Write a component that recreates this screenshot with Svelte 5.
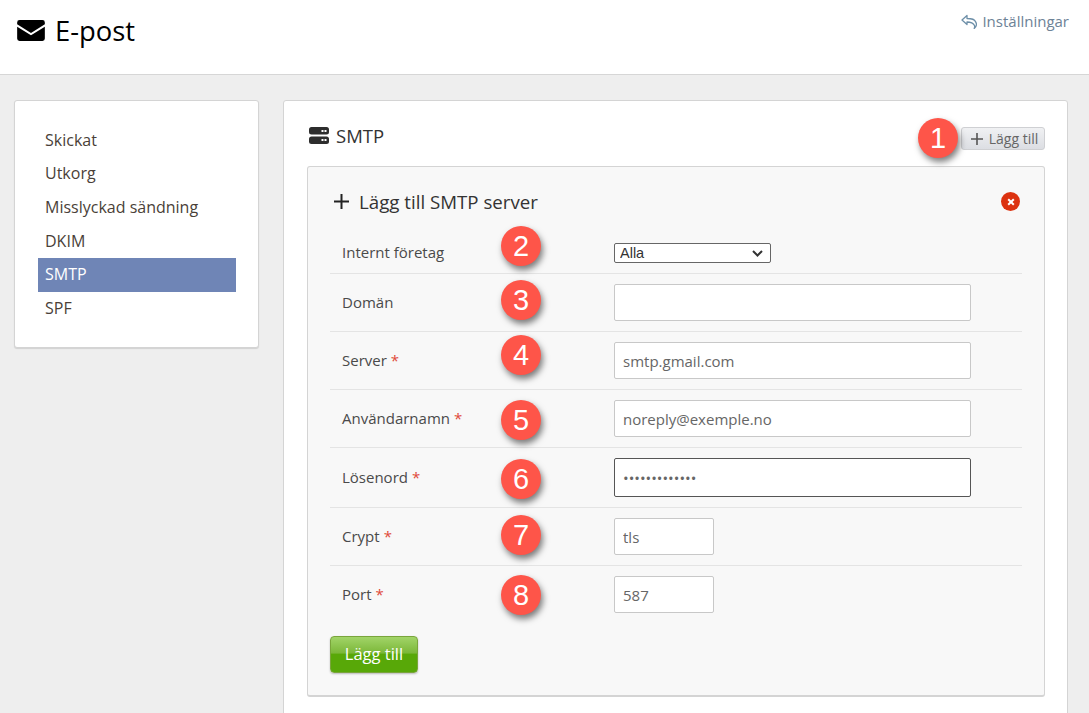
<script>
  const menu = ['Skickat', 'Utkorg', 'Misslyckad sändning', 'DKIM', 'SMTP', 'SPF'];
  const rows = [
    { label: 'Domän', value: '', req: false },
    { label: 'Server', value: 'smtp.gmail.com', req: true },
    { label: 'Användarnamn', value: 'noreply@exemple.no', req: true },
    { label: 'Lösenord', value: 'abcdefghijklm', req: true, type: 'password', focus: true },
    { label: 'Crypt', value: 'tls', req: true, small: true },
    { label: 'Port', value: '587', req: true, small: true }
  ];
  // annotation markers placed on top of the screenshot
  const badges = [
    { n: 1, x: 938, y: 138 },
    { n: 2, x: 521, y: 246 },
    { n: 3, x: 521, y: 300 },
    { n: 4, x: 521, y: 355 },
    { n: 5, x: 521, y: 420 },
    { n: 6, x: 521, y: 479 },
    { n: 7, x: 521, y: 535 },
    { n: 8, x: 521, y: 595 }
  ];
</script>

<div class="page">
  <header class="top">
    <h1>
      <svg width="28" height="21" viewBox="0 0 29 22">
        <path d="M2.500 0h24A2.500 2.500 0 0 1 29 2.500v2L14.500 13.500 0 4.500v-2A2.500 2.500 0 0 1 2.500 0z" fill="#000" />
        <path d="M0 7l14.500 9 14.500-9v12.500A2.500 2.500 0 0 1 26.500 22h-24A2.500 2.500 0 0 1 0 19.500z" fill="#000" />
      </svg>
      E-post
    </h1>
    <a class="settings" href="#top">
      <svg width="16" height="15" viewBox="0 0 16 15" fill="none" stroke="#6d8fa8" stroke-width="1.300">
        <path d="M6 1.500L1 6l5 4.500V8c3.500 0 6 .5 7.500 3.500 .3 1 .2 2-.3 3 2.600-2 2.800-5 1.200-7C13.700 5.500 10 4.500 6 4.500z" stroke-linejoin="round" />
      </svg>
      Inställningar
    </a>
  </header>

  <div class="body">
    <aside class="side">
      <ul>
        {#each menu as item}
          <li class:active={item === 'SMTP'}>{item}</li>
        {/each}
      </ul>
    </aside>

    <section class="panel">
      <div class="panel-head">
        <h2>
          <svg width="20" height="17" viewBox="0 0 20 17">
            <rect width="20" height="7.500" rx="2.500" fill="#2d2d2d" />
            <rect y="9.500" width="20" height="7.500" rx="2.500" fill="#2d2d2d" />
            <g fill="#fff">
              <rect x="12.500" y="3" width="2" height="2" /><rect x="15.500" y="3" width="2" height="2" />
              <rect x="12.500" y="12" width="2" height="2" /><rect x="15.500" y="12" width="2" height="2" />
            </g>
          </svg>
          SMTP
        </h2>
        <button class="add-small">
          <svg width="12" height="12" viewBox="0 0 12 12"><path d="M6 0v12M0 6h12" stroke="#555" stroke-width="1.600" /></svg>
          Lägg till
        </button>
      </div>

      <div class="box">
        <div class="box-head">
          <h3>
            <svg width="15" height="15" viewBox="0 0 15 15"><path d="M7.500 0v15M0 7.500h15" stroke="#222" stroke-width="2" /></svg>
            Lägg till SMTP server
          </h3>
          <span class="close">
            <svg width="8" height="8" viewBox="0 0 8 8"><path d="M1.200 1.200l5.600 5.600M6.800 1.200L1.200 6.800" stroke="#fff" stroke-width="2" /></svg>
          </span>
        </div>

        <div class="row first">
          <label for="company">Internt företag</label>
          <div class="select-wrap">
            <select id="company"><option>Alla</option></select>
            <svg class="chevron" width="11" height="7" viewBox="0 0 11 7"><path d="M1 1l4.500 4.500L10 1" fill="none" stroke="#333" stroke-width="2" /></svg>
          </div>
        </div>
        {#each rows as r}
          <div class="row" class:tall={r.focus}>
            <label for={r.label}>{r.label}{#if r.req}<span class="req">*</span>{/if}</label>
            <input id={r.label} type={r.type ?? 'text'} value={r.value} class:small={r.small} class:focus={r.focus} />
          </div>
        {/each}

        <button class="submit">Lägg till</button>
      </div>
    </section>
  </div>

  {#each badges as b}
    <span class="badge" style="left:{b.x - 20}px;top:{b.y - 20}px">{b.n}</span>
  {/each}
</div>

<style>
  :global(body) {
    background: #eee;
  }
  .page {
    position: relative;
    height: 713px;
    overflow: hidden;
    font-family: "Open Sans", sans-serif;
    font-size: 15px;
    color: #444;
  }
  .top {
    display: flex;
    justify-content: space-between;
    height: 74px;
    padding: 0 20px 0 17px;
    background: #fff;
    border-bottom: 1px solid #d6d6d6;
  }
  h1 {
    display: flex;
    align-items: center;
    gap: 10px;
    margin: 0 0 14px;
    font-size: 27.400px;
    font-weight: 400;
    color: #000;
  }
  .settings {
    display: flex;
    align-items: center;
    gap: 5px;
    height: 42px;
    color: #6d8296;
    font-size: 15px;
    text-decoration: none;
  }
  .body {
    display: flex;
    align-items: flex-start;
    gap: 24px;
    padding: 25px 21px 0 14px;
  }
  .side {
    width: 245px;
    height: 248px;
    flex: none;
    box-sizing: border-box;
    padding: 22.500px 22px 0 23px;
    background: #fff;
    border: 1px solid #d4d4d4;
    border-radius: 3px;
    box-shadow: 0 1px 1px rgba(0, 0, 0, 0.12);
  }
  ul {
    margin: 0;
    padding: 0;
    list-style: none;
  }
  li {
    height: 33.700px;
    line-height: 33.700px;
    padding-left: 7px;
    font-size: 16px;
    color: #4a3f38;
  }
  li.active {
    background: #6f85b6;
    color: #fff;
  }
  .panel {
    flex: 1;
    height: 640px;
    box-sizing: border-box;
    padding: 0 22px 0 23px;
    background: #fff;
    border: 1px solid #d4d4d4;
    border-radius: 3px;
  }
  .panel-head {
    display: flex;
    justify-content: space-between;
    align-items: center;
    height: 65px;
  }
  h2 {
    display: flex;
    align-items: center;
    gap: 7px;
    margin: 3px 0 0 2px;
    font-size: 18.500px;
    font-weight: 400;
    color: #333;
  }
  .add-small {
    display: flex;
    align-items: center;
    justify-content: center;
    gap: 6px;
    width: 84px;
    height: 23px;
    margin-top: 10px;
    padding: 0 0 0 3px;
    font-family: inherit;
    font-size: 14px;
    color: #666;
    background: linear-gradient(#f0f1f3, #dcdee3);
    border: 1px solid #cfd0d3;
    border-radius: 3px;
  }
  .box {
    height: 531px;
    box-sizing: border-box;
    padding: 0 22px 0 22px;
    background: #f8f8f8;
    border: 1px solid #d4d4d4;
    border-bottom-width: 2px;
    border-radius: 3px;
  }
  .box-head {
    display: flex;
    justify-content: space-between;
    align-items: center;
    height: 70px;
    padding: 0 2px 0 4px;
  }
  h3 {
    display: flex;
    align-items: center;
    gap: 10px;
    margin: 0 0 2px;
    font-size: 18.700px;
    font-weight: 400;
    color: #333;
  }
  .close {
    display: flex;
    align-items: center;
    justify-content: center;
    width: 19px;
    height: 19px;
    margin-bottom: 1px;
    background: #dc3210;
    border-radius: 50%;
  }
  .row {
    display: flex;
    align-items: center;
    height: 57px;
    border-top: 1px solid #e4e4e4;
  }
  .row.tall {
    height: 59px;
  }
  .row.first {
    height: 32px;
    padding-bottom: 4px;
    border-top: 0;
  }
  label {
    width: 284px;
    flex: none;
    padding-left: 12px;
    box-sizing: border-box;
    margin-bottom: 2px;
    font-size: 15px;
    color: #4a4a4a;
  }
  .req {
    padding-left: 4px;
    color: #e0493a;
  }
  .select-wrap {
    position: relative;
    display: flex;
  }
  select {
    appearance: none;
    width: 157px;
    height: 20px;
    padding: 0 0 0 5px;
    font-family: "Liberation Sans", sans-serif;
    font-size: 14.500px;
    color: #333;
    background: #fff;
    border: 1px solid #666;
    border-radius: 2px;
  }
  .chevron {
    position: absolute;
    top: 7px;
    right: 8px;
    pointer-events: none;
  }
  input {
    width: 357px;
    height: 37px;
    box-sizing: border-box;
    padding: 1px 8px 0;
    font-family: inherit;
    font-size: 15px;
    color: #666;
    background: #fff;
    border: 1px solid #c8c8c8;
    border-radius: 2px;
    outline: 0;
  }
  input.small {
    width: 100px;
  }
  input.focus {
    border-color: #555;
    height: 39px;
  }
  .submit {
    display: block;
    width: 88px;
    height: 37px;
    margin-top: 13px;
    padding: 0 0 2px;
    font-family: inherit;
    font-size: 16.500px;
    color: #fff;
    background: linear-gradient(#a2d468 0, #7cb83a 45%, #58a808 50%, #58a808 100%);
    border: 1px solid #7aa53c;
    border-radius: 4px;
    box-shadow: 0 1px 2px rgba(0, 0, 0, 0.25);
  }
  .badge {
    position: absolute;
    width: 40px;
    height: 40px;
    line-height: 40px;
    text-align: center;
    font-family: "Liberation Sans", sans-serif;
    font-size: 29px;
    color: #fff;
    background: #fe5549;
    border-radius: 50%;
    box-shadow: 2px 4px 6px rgba(0, 0, 0, 0.5);
  }
</style>
